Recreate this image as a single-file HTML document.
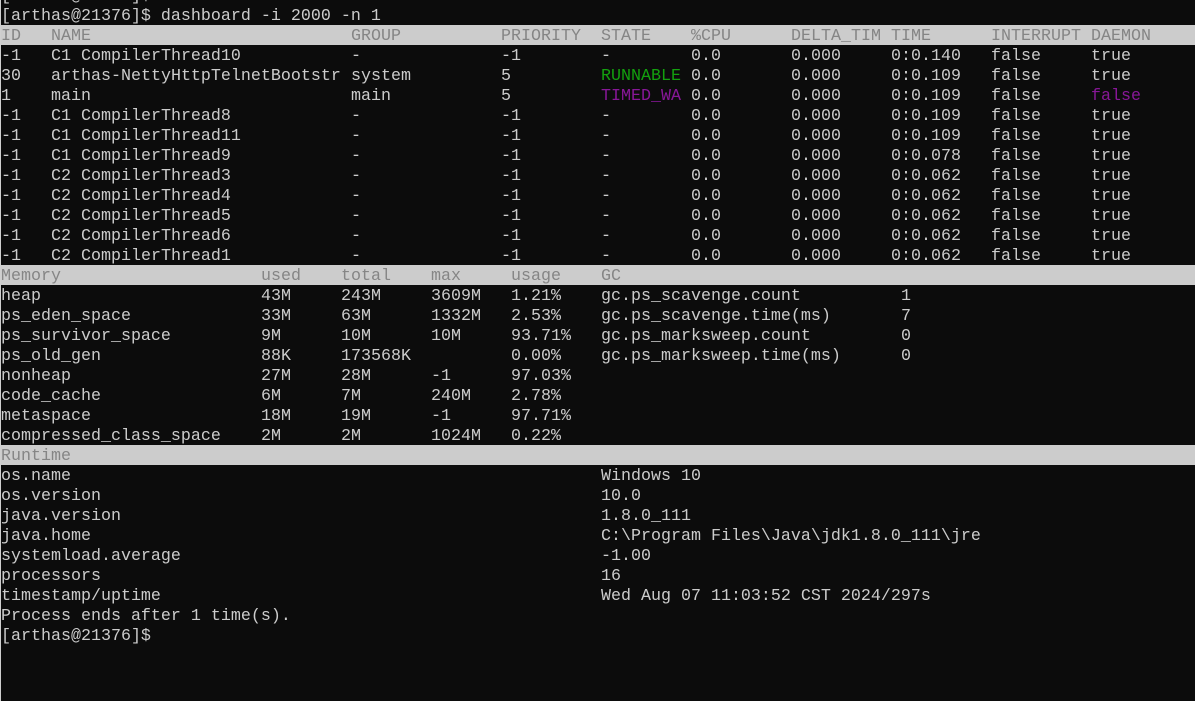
<!DOCTYPE html>
<html><head><meta charset="utf-8"><style>
html,body{margin:0;padding:0;background:#0c0c0c;width:1195px;height:701px;overflow:hidden}
body{position:relative;font-family:"Liberation Mono",monospace;font-size:16.67px;color:#cccccc}
.r{position:absolute;left:1px;height:20px;line-height:23px;white-space:pre;width:1194px;overflow:hidden}
.r span{display:inline-block;overflow:hidden;white-space:pre;vertical-align:top;height:20px}
.h{background:#cccccc;color:#858585;left:0;padding-left:1px}
.t span:nth-child(1){width:50px}.t span:nth-child(2){width:300px}.t span:nth-child(3){width:150px}
.t span:nth-child(4){width:100px}.t span:nth-child(5){width:90px}.t span:nth-child(6){width:100px}
.t span:nth-child(7){width:100px}.t span:nth-child(8){width:100px}.t span:nth-child(9){width:100px}
.m span:nth-child(1){width:260px}.m span:nth-child(2){width:80px}.m span:nth-child(3){width:90px}
.m span:nth-child(4){width:80px}.m span:nth-child(5){width:90px}.m span:nth-child(6){width:300px}
.x span:nth-child(1){width:600px}
.g{color:#13a10e}.p{color:#881798}
.edge{position:absolute;left:0;top:0;width:1px;height:701px;background:#cfcfcf}
</style></head><body>
<div class="r" style="top:-15px">[arthas@21376]$</div>
<div class="r" style="top:5px">[arthas@21376]$ dashboard -i 2000 -n 1</div>
<div class="r t h" style="top:25px"><span>ID</span><span>NAME</span><span>GROUP</span><span>PRIORITY</span><span>STATE</span><span>%CPU</span><span>DELTA_TIM</span><span>TIME</span><span>INTERRUPT</span><span>DAEMON</span></div>
<div class="r t" style="top:45px"><span>-1</span><span>C1 CompilerThread10</span><span>-</span><span>-1</span><span>-</span><span>0.0</span><span>0.000</span><span>0:0.140</span><span>false</span><span>true</span></div>
<div class="r t" style="top:65px"><span>30</span><span>arthas-NettyHttpTelnetBootstr</span><span>system</span><span>5</span><span class="g">RUNNABLE</span><span>0.0</span><span>0.000</span><span>0:0.109</span><span>false</span><span>true</span></div>
<div class="r t" style="top:85px"><span>1</span><span>main</span><span>main</span><span>5</span><span class="p">TIMED_WA</span><span>0.0</span><span>0.000</span><span>0:0.109</span><span>false</span><span class="p">false</span></div>
<div class="r t" style="top:105px"><span>-1</span><span>C1 CompilerThread8</span><span>-</span><span>-1</span><span>-</span><span>0.0</span><span>0.000</span><span>0:0.109</span><span>false</span><span>true</span></div>
<div class="r t" style="top:125px"><span>-1</span><span>C1 CompilerThread11</span><span>-</span><span>-1</span><span>-</span><span>0.0</span><span>0.000</span><span>0:0.109</span><span>false</span><span>true</span></div>
<div class="r t" style="top:145px"><span>-1</span><span>C1 CompilerThread9</span><span>-</span><span>-1</span><span>-</span><span>0.0</span><span>0.000</span><span>0:0.078</span><span>false</span><span>true</span></div>
<div class="r t" style="top:165px"><span>-1</span><span>C2 CompilerThread3</span><span>-</span><span>-1</span><span>-</span><span>0.0</span><span>0.000</span><span>0:0.062</span><span>false</span><span>true</span></div>
<div class="r t" style="top:185px"><span>-1</span><span>C2 CompilerThread4</span><span>-</span><span>-1</span><span>-</span><span>0.0</span><span>0.000</span><span>0:0.062</span><span>false</span><span>true</span></div>
<div class="r t" style="top:205px"><span>-1</span><span>C2 CompilerThread5</span><span>-</span><span>-1</span><span>-</span><span>0.0</span><span>0.000</span><span>0:0.062</span><span>false</span><span>true</span></div>
<div class="r t" style="top:225px"><span>-1</span><span>C2 CompilerThread6</span><span>-</span><span>-1</span><span>-</span><span>0.0</span><span>0.000</span><span>0:0.062</span><span>false</span><span>true</span></div>
<div class="r t" style="top:245px"><span>-1</span><span>C2 CompilerThread1</span><span>-</span><span>-1</span><span>-</span><span>0.0</span><span>0.000</span><span>0:0.062</span><span>false</span><span>true</span></div>
<div class="r m h" style="top:265px"><span>Memory</span><span>used</span><span>total</span><span>max</span><span>usage</span><span>GC</span></div>
<div class="r m" style="top:285px"><span>heap</span><span>43M</span><span>243M</span><span>3609M</span><span>1.21%</span><span>gc.ps_scavenge.count</span><span>1</span></div>
<div class="r m" style="top:305px"><span>ps_eden_space</span><span>33M</span><span>63M</span><span>1332M</span><span>2.53%</span><span>gc.ps_scavenge.time(ms)</span><span>7</span></div>
<div class="r m" style="top:325px"><span>ps_survivor_space</span><span>9M</span><span>10M</span><span>10M</span><span>93.71%</span><span>gc.ps_marksweep.count</span><span>0</span></div>
<div class="r m" style="top:345px"><span>ps_old_gen</span><span>88K</span><span>173568K</span><span></span><span>0.00%</span><span>gc.ps_marksweep.time(ms)</span><span>0</span></div>
<div class="r m" style="top:365px"><span>nonheap</span><span>27M</span><span>28M</span><span>-1</span><span>97.03%</span></div>
<div class="r m" style="top:385px"><span>code_cache</span><span>6M</span><span>7M</span><span>240M</span><span>2.78%</span></div>
<div class="r m" style="top:405px"><span>metaspace</span><span>18M</span><span>19M</span><span>-1</span><span>97.71%</span></div>
<div class="r m" style="top:425px"><span>compressed_class_space</span><span>2M</span><span>2M</span><span>1024M</span><span>0.22%</span></div>
<div class="r h" style="top:445px">Runtime</div>
<div class="r x" style="top:465px"><span>os.name</span><span>Windows 10</span></div>
<div class="r x" style="top:485px"><span>os.version</span><span>10.0</span></div>
<div class="r x" style="top:505px"><span>java.version</span><span>1.8.0_111</span></div>
<div class="r x" style="top:525px"><span>java.home</span><span>C:\Program Files\Java\jdk1.8.0_111\jre</span></div>
<div class="r x" style="top:545px"><span>systemload.average</span><span>-1.00</span></div>
<div class="r x" style="top:565px"><span>processors</span><span>16</span></div>
<div class="r x" style="top:585px"><span>timestamp/uptime</span><span>Wed Aug 07 11:03:52 CST 2024/297s</span></div>
<div class="r" style="top:605px">Process ends after 1 time(s).</div>
<div class="r" style="top:625px">[arthas@21376]$</div>
<div class="edge"></div>
</body></html>
